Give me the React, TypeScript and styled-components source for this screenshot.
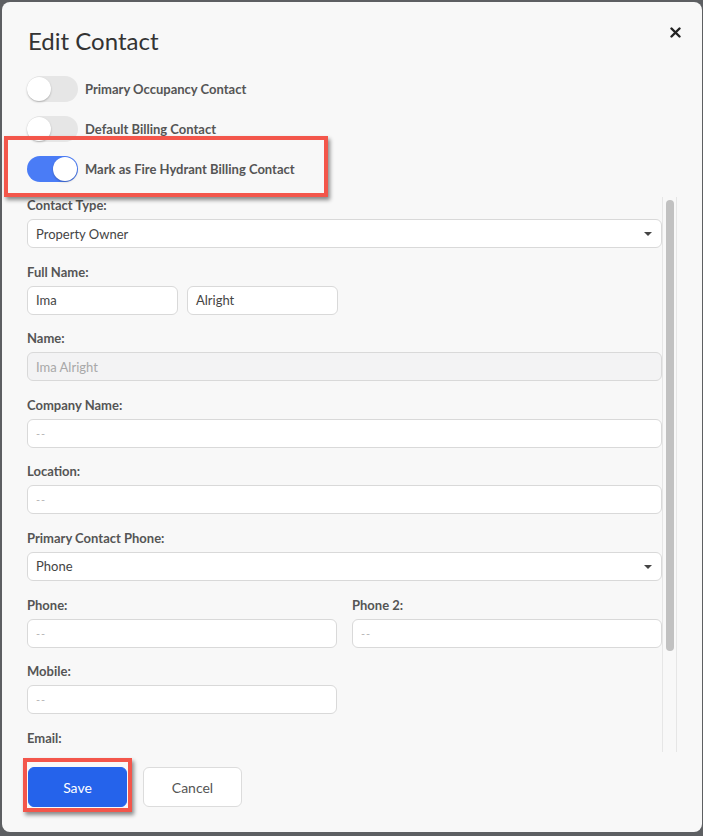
import React from "react";
import styled, { createGlobalStyle } from "styled-components";

const GlobalStyle = createGlobalStyle`
  html, body {
    margin: 0;
    padding: 0;
    background: #5d5f62;
  }
  body {
    font-family: Lato, "Open Sans", Arial, sans-serif;
    -webkit-font-smoothing: antialiased;
  }
  * { box-sizing: border-box; }
`;

const Modal = styled.div`
  position: relative;
  margin: 2px;
  width: 700px;
  height: 830px;
  background: #f8f8f8;
  border-radius: 8px;
  padding: 25px;
  display: flex;
  flex-direction: column;
`;

const Title = styled.h2`
  margin: 0 0 21px 1px;
  font-size: 24px;
  line-height: 28px;
  font-weight: 400;
  color: #333;
`;

const CloseButton = styled.button`
  position: absolute;
  top: 23px;
  right: 20px;
  width: 14px;
  height: 14px;
  padding: 0;
  border: 0;
  background: none;
  display: flex;
  align-items: center;
  justify-content: center;
  cursor: pointer;
`;

const ToggleList = styled.div`
  display: flex;
  flex-direction: column;
  gap: 14px;
  margin-bottom: 15px;
`;

const ToggleRow = styled.label`
  position: relative;
  display: flex;
  align-items: center;
  gap: 7px;
  height: 26px;
`;

const Track = styled.span<{ $on?: boolean }>`
  position: relative;
  width: 51px;
  height: 26px;
  border-radius: 13px;
  background: ${(p) => (p.$on ? "#4a7cf6" : "#e6e6e6")};
  flex-shrink: 0;
`;

const Knob = styled.span<{ $on?: boolean }>`
  position: absolute;
  top: 1px;
  left: ${(p) => (p.$on ? "26px" : "0")};
  width: 24px;
  height: 24px;
  border-radius: 50%;
  background: #fff;
  box-shadow: 0 1px 2px rgba(0, 0, 0, 0.25);
`;

const ToggleText = styled.span`
  font-size: 13px;
  font-weight: 700;
  color: #555;
`;

// red callout frame drawn over a control
const Callout = styled.span<{ $l: number; $t: number; $w: number; $h: number }>`
  position: absolute;
  left: ${(p) => p.$l}px;
  top: ${(p) => p.$t}px;
  width: ${(p) => p.$w}px;
  height: ${(p) => p.$h}px;
  border: 4px solid #f3564b;
  box-shadow: 2px 3px 4px rgba(0, 0, 0, 0.45);
  pointer-events: none;
`;

const ScrollArea = styled.div`
  display: flex;
  height: 555px;
`;

const Form = styled.div`
  flex: 1;
  overflow: hidden;
`;

// drawn scrollbar rail beside the form
const Rail = styled.div`
  width: 15px;
  flex-shrink: 0;
  border-left: 1px solid #e6e6e6;
  border-right: 1px solid #e6e6e6;
  padding: 3px 2px 0 3px;
`;

const Thumb = styled.div`
  width: 8px;
  height: 451px;
  border-radius: 4px;
  background: #c1c1c1;
`;

const Group = styled.div`
  margin-bottom: 15.6px;
`;

const Row = styled.div<{ $gap: number }>`
  display: flex;
  gap: ${(p) => p.$gap}px;
`;

const Label = styled.div`
  font-size: 13px;
  line-height: 16px;
  font-weight: 700;
  color: #555;
  margin-bottom: 6px;
`;

const Field = styled.div<{ $w?: number; $disabled?: boolean }>`
  position: relative;
  width: ${(p) => (p.$w ? `${p.$w}px` : "100%")};
  height: 29px;
  border: 1px solid #d9d9d9;
  border-radius: 6px;
  background: ${(p) => (p.$disabled ? "#f3f3f4" : "#fff")};
  padding: 0 8px;
  display: flex;
  align-items: center;
  font-size: 13px;
  color: #444;
`;

const Placeholder = styled.span<{ $dash?: boolean }>`
  color: ${(p) => (p.$dash ? "#b5b5b5" : "#a8a8a8")};
  font-size: ${(p) => (p.$dash ? "11px" : "13px")};
  letter-spacing: ${(p) => (p.$dash ? "1px" : "0")};
`;

const Caret = styled.span`
  position: absolute;
  right: 9px;
  top: 12px;
  width: 0;
  height: 0;
  border-left: 4px solid transparent;
  border-right: 4px solid transparent;
  border-top: 4px solid #444;
`;

const Footer = styled.div`
  display: flex;
  gap: 16px;
  margin-top: 15px;
  padding-left: 1px;
`;

const ButtonWrap = styled.span`
  position: relative;
  display: inline-flex;
`;

const Button = styled.button<{ $primary?: boolean }>`
  width: 99px;
  height: 40px;
  border-radius: 6px;
  font-family: inherit;
  font-size: 14px;
  cursor: pointer;
  border: 1px solid ${(p) => (p.$primary ? "#2563eb" : "#dcdcdc")};
  background: ${(p) => (p.$primary ? "#2563eb" : "#fff")};
  color: ${(p) => (p.$primary ? "#fff" : "#555")};
`;

function Toggle({ on, label, children }: { on?: boolean; label: string; children?: React.ReactNode }) {
  return (
    <ToggleRow>
      <Track $on={on}>
        <Knob $on={on} />
      </Track>
      <ToggleText>{label}</ToggleText>
      {children}
    </ToggleRow>
  );
}

function Select({ value }: { value: string }) {
  return (
    <Field>
      {value}
      <Caret />
    </Field>
  );
}

function Empty({ w }: { w?: number }) {
  return (
    <Field $w={w}>
      <Placeholder $dash>--</Placeholder>
    </Field>
  );
}

export default function App() {
  return (
    <>
      <GlobalStyle />
      <Modal>
        <Title>Edit Contact</Title>
        <CloseButton aria-label="Close">
          <svg width="11" height="11" viewBox="0 0 11 11">
            <path d="M1.5 1.5 L9.5 9.5 M9.5 1.5 L1.5 9.5" stroke="#222" strokeWidth="2.4" strokeLinecap="round" />
          </svg>
        </CloseButton>

        <ToggleList>
          <Toggle label="Primary Occupancy Contact" />
          <Toggle label="Default Billing Contact" />
          <Toggle on label="Mark as Fire Hydrant Billing Contact">
            <Callout $l={-23} $t={-20} $w={324} $h={61} />
          </Toggle>
        </ToggleList>

        <ScrollArea>
          <Form>
            <Group>
              <Label>Contact Type:</Label>
              <Select value="Property Owner" />
            </Group>
            <Group>
              <Label>Full Name:</Label>
              <Row $gap={9}>
                <Field $w={151}>Ima</Field>
                <Field $w={151}>Alright</Field>
              </Row>
            </Group>
            <Group>
              <Label>Name:</Label>
              <Field $disabled>
                <Placeholder>Ima Alright</Placeholder>
              </Field>
            </Group>
            <Group>
              <Label>Company Name:</Label>
              <Empty />
            </Group>
            <Group>
              <Label>Location:</Label>
              <Empty />
            </Group>
            <Group>
              <Label>Primary Contact Phone:</Label>
              <Select value="Phone" />
            </Group>
            <Row $gap={15}>
              <Group style={{ flex: 1 }}>
                <Label>Phone:</Label>
                <Empty />
              </Group>
              <Group style={{ flex: 1 }}>
                <Label>Phone 2:</Label>
                <Empty />
              </Group>
            </Row>
            <Group>
              <Label>Mobile:</Label>
              <Empty w={310} />
            </Group>
            <Group>
              <Label>Email:</Label>
              <Empty />
            </Group>
          </Form>
          <Rail>
            <Thumb />
          </Rail>
        </ScrollArea>

        <Footer>
          <ButtonWrap>
            <Button $primary>Save</Button>
            <Callout $l={-5} $t={-9} $w={109} $h={54} />
          </ButtonWrap>
          <Button>Cancel</Button>
        </Footer>
      </Modal>
    </>
  );
}
